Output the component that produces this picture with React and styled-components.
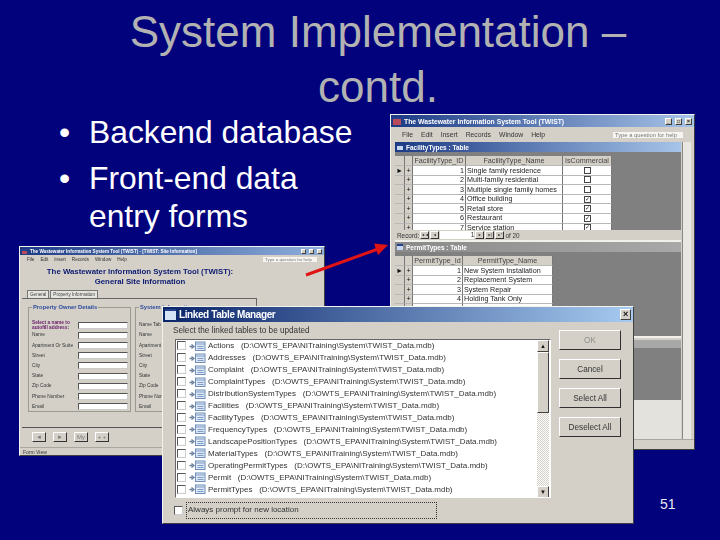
import React from 'react';
import styled, {createGlobalStyle} from 'styled-components';

const GlobalStyle = createGlobalStyle`
    html, body {
        margin: 0;
        padding: 0;
        background: #02027c;
    }
`;

const Slide = styled.div`
    position: relative;
    width: 720px;
    height: 540px;
    overflow: hidden;
    background: #02027c;
    font-family: "Liberation Sans", Arial, sans-serif;
`;

const Title = styled.h1`
    margin: 0 0 0 98px;
    padding-top: 4px;
    width: 560px;
    font-size: 44px;
    line-height: 55px;
    font-weight: normal;
    text-align: center;
    color: #b2b2b2;
`;

const Bullets = styled.ul`
    margin: -1px 0 0 89px;
    padding: 0;
    list-style: none;
    color: #fff;
    font-size: 31.8px;
    line-height: 38px;
`;

const Bullet = styled.li`
    position: relative;
    margin-bottom: 8px;
    &::before {
        content: "•";
        position: absolute;
        left: -30px;
    }
`;

const PageNumber = styled.div`
    position: absolute;
    left: 660px;
    top: 496px;
    font-size: 14px;
    color: #e8e8f4;
`;

/* screenshots pasted on the slide: free canvas */
const Win = styled.div`
    position: absolute;
    left: ${p => p.x}px;
    top: ${p => p.y}px;
    width: ${p => p.w}px;
    height: ${p => p.h}px;
    display: flex;
    flex-direction: column;
    box-sizing: border-box;
    background: #d4d0c8;
    border: 1px solid #f4f2ec;
    border-right-color: #404040;
    border-bottom-color: #404040;
    filter: blur(0.35px);
    overflow: hidden;
    color: #222;
`;

const TitleBar = styled.div`
    flex: none;
    height: ${p => p.h}px;
    display: flex;
    align-items: center;
    padding: 0 2px;
    gap: 3px;
    background: linear-gradient(90deg, ${p => p.from || '#0a246a'}, ${p => p.to || '#a6caf0'});
    color: #fff;
    font-size: ${p => p.size}px;
    letter-spacing: ${p => p.track || 0}px;
    font-weight: bold;
    white-space: nowrap;
`;

const TitleIcon = styled.span`
    width: ${p => p.s}px;
    height: ${p => p.s}px;
    flex: none;
    background: ${p => p.c || '#c9d8f0'};
    border-top: 2px solid #24408c;
    box-sizing: border-box;
`;

const TitleText = styled.span`
    flex: 1;
`;

const CaptionButton = styled.span`
    width: ${p => p.s}px;
    height: ${p => p.s}px;
    flex: none;
    display: flex;
    align-items: center;
    justify-content: center;
    background: #d4d0c8;
    color: #111;
    font-size: ${p => p.s - 2}px;
    line-height: 1;
    border: 1px solid;
    border-color: #fff #404040 #404040 #fff;
    box-sizing: border-box;
`;

const MenuBar = styled.div`
    flex: none;
    height: ${p => p.h}px;
    display: flex;
    align-items: center;
    gap: ${p => p.gap}px;
    padding: 0 ${p => p.inset}px;
    font-size: ${p => p.size}px;
    color: #333;
`;

const HelpBox = styled.span`
    margin-left: auto;
    width: ${p => p.w}px;
    padding: 0 2px;
    background: #f6f5f2;
    color: #777;
    font-size: ${p => p.size}px;
    white-space: nowrap;
`;

/* access main window */
const Mdi = styled.div`
    flex: 1;
    display: flex;
    min-height: 0;
`;

const MdiBody = styled.div`
    flex: 1;
    padding: 0 0 0 4px;
    display: flex;
    flex-direction: column;
    min-width: 0;
`;

const MdiScroll = styled.div`
    flex: none;
    width: 8px;
    margin: 0 3px 0 1px;
    background: #e9e7e2;
    border-left: 1px solid #888;
`;

const Child = styled.div`
    flex: none;
    height: ${p => p.h}px;
    display: flex;
    flex-direction: column;
    background: #808080;
    border-bottom: 2px solid #f2f0ea;
    overflow: hidden;
`;

const Sheet = styled.div`
    flex: 1;
    min-height: 0;
    overflow: hidden;
`;

const SheetGrid = styled.div`
    display: inline-grid;
    grid-template-columns: ${p => p.cols};
    grid-auto-rows: 9.6px;
    font-size: 7.2px;
    line-height: 9.6px;
`;

const Cell = styled.div`
    box-sizing: border-box;
    background: ${p => p.head ? '#d4d0c8' : '#fff'};
    border-right: 1px solid #777;
    border-bottom: 1px solid #b8b8b8;
    padding: 0 1px;
    white-space: nowrap;
    display: flex;
    align-items: center;
    justify-content: ${p => p.align === 'right' ? 'flex-end' : p.align === 'center' ? 'center' : 'flex-start'};
    color: ${p => p.head ? '#444' : '#222'};
`;

const Selector = styled(Cell)`
    background: #d4d0c8;
    color: #111;
    justify-content: center;
`;

const Tick = styled.span`
    width: 5px;
    height: 5px;
    border: 1px solid #444;
    background: #fff;
    color: #222;
    font-size: 6px;
    line-height: 5px;
    text-align: center;
`;

const NavBar = styled.div`
    flex: none;
    height: 10px;
    display: flex;
    align-items: center;
    gap: 1px;
    padding-left: 2px;
    background: #d4d0c8;
    font-size: 6.4px;
    color: #333;
`;

const NavButton = styled.span`
    width: 9px;
    height: 8px;
    display: flex;
    align-items: center;
    justify-content: center;
    border: 1px solid;
    border-color: #fff #333 #333 #fff;
    box-sizing: border-box;
    font-size: 3.6px;
    color: #111;
`;

const NavInput = styled.span`
    width: 34px;
    height: 8px;
    background: #fff;
    text-align: right;
    line-height: 8px;
`;

const CollapsedChild = styled.div`
    flex: none;
    height: 60px;
    display: flex;
    flex-direction: column;
    background: #808080;
    margin-top: 2px;
`;

const GreyCaption = styled.div`
    height: 8px;
    background: #a8a8a8;
`;

const AppFloor = styled.div`
    flex: 1;
    background: #e4e2dc;
`;

const StatusBar = styled.div`
    flex: none;
    height: ${p => p.h}px;
    display: flex;
    align-items: center;
    padding: 0 3px;
    font-size: 5px;
    color: #333;
    background: #d4d0c8;
    border-top: 1px solid #a8a8a0;
`;

/* the site information form */
const FormHeading = styled.div`
    flex: none;
    width: 240px;
    margin: 4px 0 0 0;
    text-align: center;
    color: #0c1a70;
    font-size: 7.8px;
    line-height: 9.5px;
    font-weight: bold;
`;

const TabRow = styled.div`
    flex: none;
    display: flex;
    margin: 4px 0 0 7px;
    gap: 1px;
`;

const Tab = styled.span`
    padding: 0 2px;
    height: 7px;
    line-height: 7px;
    font-size: 4.6px;
    color: #444;
    background: #e6e4de;
    border: 1px solid #777;
    border-bottom: none;
`;

const TabPanel = styled.div`
    flex: none;
    width: 235px;
    height: 129px;
    margin-left: 2px;
    padding: 8px 0 0 6px;
    box-sizing: border-box;
    display: flex;
    gap: 4px;
    border-top: 1px solid #666;
    border-right: 1px solid #666;
`;

const GroupBox = styled.div`
    position: relative;
    flex: none;
    width: ${p => p.w}px;
    height: 105px;
    box-sizing: border-box;
    padding: 12px 3px 0 3px;
    border: 1px solid #9a9a94;
`;

const GroupLabel = styled.span`
    position: absolute;
    left: 3px;
    top: -4px;
    padding: 0 1px;
    background: #d4d0c8;
    color: #2a4a9c;
    font-size: 5.8px;
    font-weight: bold;
    white-space: nowrap;
`;

const FormRow = styled.div`
    height: 10.2px;
    display: flex;
    align-items: center;
    font-size: 4.8px;
    color: ${p => p.accent ? '#6a1a6a' : '#333'};
    font-weight: ${p => p.accent ? 'bold' : 'normal'};
`;

const FormLabel = styled.span`
    width: 46px;
    flex: none;
    line-height: 5.6px;
    white-space: nowrap;
`;

const FormInput = styled.span`
    width: 50px;
    height: 7px;
    flex: none;
    background: #fff;
    border: 1px solid #555;
    border-right-color: #ccc;
    border-bottom-color: #ccc;
    box-sizing: border-box;
`;

const FormFooter = styled.div`
    flex: none;
    height: 20px;
    width: 143px;
    margin-left: 2px;
    padding: 4px 0 0 10px;
    box-sizing: border-box;
    display: flex;
    gap: 7px;
    border-top: 1px solid #555;
`;

const FooterButton = styled.span`
    width: 14px;
    height: 10px;
    display: flex;
    align-items: center;
    justify-content: center;
    font-size: 6px;
    color: #777;
    border: 1px solid;
    border-color: #fff #333 #333 #fff;
    box-sizing: border-box;
`;

/* linked table manager dialog */
const DialogBody = styled.div`
    flex: 1;
    display: grid;
    grid-template-columns: 378px 1fr;
    grid-template-rows: 17px 159px 1fr;
    column-gap: 8px;
    padding: 0 0 0 10px;
    color: #333;
    min-height: 0;
`;

const Prompt = styled.div`
    grid-column: 1 / 3;
    padding-top: 3px;
    line-height: 12px;
    font-size: 8.2px;
`;

const ListBox = styled.div`
    grid-column: 1;
    grid-row: 2;
    position: relative;
    margin-left: 2px;
    box-sizing: border-box;
    background: #fff;
    border: 1px solid;
    border-color: #666 #fff #fff #666;
    overflow: hidden;
`;

const ListRow = styled.div`
    height: 11.93px;
    display: flex;
    align-items: center;
    white-space: pre;
    font-size: 8px;
`;

const Check = styled.span`
    flex: none;
    width: 9px;
    height: 9px;
    margin: 0 3px 0 1px;
    box-sizing: border-box;
    background: #fff;
    border: 1px solid;
    border-color: #555 #ccc #ccc #555;
`;

const ScrollBar = styled.div`
    position: absolute;
    top: 0;
    right: 1px;
    bottom: 0;
    width: 12px;
    display: flex;
    flex-direction: column;
    background: repeating-conic-gradient(#d4d0c8 0 25%, #fff 0 50%) 0 0 / 2px 2px;
`;

const ScrollButton = styled.span`
    flex: none;
    height: ${p => p.h}px;
    margin-bottom: ${p => p.push || 0}px;
    display: flex;
    align-items: center;
    justify-content: center;
    background: #d4d0c8;
    font-size: 6px;
    color: #111;
    box-sizing: border-box;
    border: 1px solid;
    border-color: #fff #404040 #404040 #fff;
`;

const ButtonColumn = styled.div`
    grid-column: 2;
    grid-row: 2 / 4;
    display: flex;
    flex-direction: column;
    gap: 9px;
    margin-top: -9px;
`;

const DialogButton = styled.div`
    width: 62px;
    height: 20px;
    display: flex;
    align-items: center;
    justify-content: center;
    box-sizing: border-box;
    font-size: 8.2px;
    background: #d4d0c8;
    color: ${p => p.$disabled ? '#8c8c86' : '#333'};
    border: 1px solid;
    border-color: #fff #303030 #303030 #fff;
`;

const AlwaysRow = styled.div`
    grid-column: 1;
    grid-row: 3;
    margin-top: 4px;
    display: flex;
    align-items: center;
    height: 17px;
`;

const AlwaysLabel = styled.span`
    width: 251px;
    height: 17px;
    box-sizing: border-box;
    padding-left: 1px;
    line-height: 13px;
    border: 1px dotted #333;
    font-size: 8px;
`;

const Pointer = styled.svg`
    position: absolute;
    left: 300px;
    top: 240px;
`;

const TableGlyph = () => (
    <svg width="19" height="10" viewBox="0 0 19 10" style={{flex: 'none'}}>
        <path d="M0.5 5.5h3M2.5 3.5l2.5 2-2.5 2" fill="none" stroke="#6a7f9c" strokeWidth="1.3" />
        <rect x="6.5" y="1" width="9.5" height="8.5" fill="#dfe8f6" stroke="#6f8fb8" />
        <path d="M6.5 3h9.5M8.5 5.5h6M8.5 7.5h6" stroke="#7f9cc4" strokeWidth="1" />
    </svg>
);

const facilityRows = [
    ['1', 'Single family residence', false],
    ['2', 'Multi-family residential', false],
    ['3', 'Multiple single family homes', false],
    ['4', 'Office building', true],
    ['5', 'Retail store', true],
    ['6', 'Restaurant', true],
    ['7', 'Service station', true],
];

const permitRows = [
    ['1', 'New System Installation'],
    ['2', 'Replacement System'],
    ['3', 'System Repair'],
    ['4', 'Holding Tank Only'],
    ['5', 'Other'],
];

const path = 'D:\\OWTS_EPA\\NITraining\\System\\TWIST_Data.mdb';
const linkedTables = [
    'Actions', 'Addresses', 'Complaint', 'ComplaintTypes', 'DistributionSystemTypes',
    'Facilities', 'FacilityTypes', 'FrequencyTypes', 'LandscapePositionTypes',
    'MaterialTypes', 'OperatingPermitTypes', 'Permit', 'PermitTypes',
];

const ownerFields = [
    'Name', 'Apartment Or Suite', 'Street', 'City', 'State', 'Zip Code', 'Phone Number', 'Email',
];
const systemFields = [
    'Name Tab', 'Name', 'Apartment', 'Street', 'City', 'State', 'Zip Code', 'Phone Numb', 'Email',
];

function AccessWindow() {
    return (
        <Win x={390} y={114} w={305} h={336}>
            <TitleBar h={12} size={6.8} from="#1c3a84" to="#a6c4e8">
                <TitleIcon s={8} c="#b84a5a" />
                <TitleText>The Wastewater Information System Tool (TWIST)</TitleText>
                <CaptionButton s={7}>_</CaptionButton>
                <CaptionButton s={7}>□</CaptionButton>
                <CaptionButton s={7}>×</CaptionButton>
            </TitleBar>
            <MenuBar h={15} gap={8} inset={11} size={6.8}>
                <span>File</span><span>Edit</span><span>Insert</span><span>Records</span><span>Window</span><span>Help</span>
                <HelpBox w={66} size={5.8}>Type a question for help</HelpBox>
            </MenuBar>
            <Mdi>
                <MdiBody>
                    <Child h={98}>
                        <TitleBar h={10} size={6.5} from="#1c3a84" to="#a6c4e8">
                            <TitleIcon s={6} />
                            <TitleText>FacilityTypes : Table</TitleText>
                        </TitleBar>
                        <Sheet>
                            <SheetGrid cols="10px 8px 53px 97px 49px">
                                <Selector head /><Selector head />
                                <Cell head align="center">FacilityType_ID</Cell>
                                <Cell head align="center">FacilityType_Name</Cell>
                                <Cell head align="center">IsCommercial</Cell>
                                {facilityRows.map(([id, name, on], i) => (
                                    <React.Fragment key={id}>
                                        <Selector>{i === 0 ? '►' : ''}</Selector>
                                        <Selector>+</Selector>
                                        <Cell align="right">{id}</Cell>
                                        <Cell>{name}</Cell>
                                        <Cell align="center"><Tick>{on ? '✓' : ''}</Tick></Cell>
                                    </React.Fragment>
                                ))}
                            </SheetGrid>
                        </Sheet>
                        <NavBar>
                            Record: <NavButton>◄◄</NavButton><NavButton>◄</NavButton>
                            <NavInput>1</NavInput>
                            <NavButton>►</NavButton><NavButton>►|</NavButton><NavButton>►*</NavButton>
                            of 20
                        </NavBar>
                    </Child>
                    <Child h={94}>
                        <TitleBar h={10} size={6.5} from="#8a8a8a" to="#a8a8a8">
                            <TitleIcon s={6} />
                            <TitleText>PermitTypes : Table</TitleText>
                        </TitleBar>
                        <Sheet>
                            <SheetGrid cols="10px 8px 50px 90px">
                                <Selector head /><Selector head />
                                <Cell head align="center">PermitType_Id</Cell>
                                <Cell head align="center">PermitType_Name</Cell>
                                {permitRows.map(([id, name], i) => (
                                    <React.Fragment key={id}>
                                        <Selector>{i === 0 ? '►' : ''}</Selector>
                                        <Selector>+</Selector>
                                        <Cell align="right">{id}</Cell>
                                        <Cell>{name}</Cell>
                                    </React.Fragment>
                                ))}
                            </SheetGrid>
                        </Sheet>
                    </Child>
                    <CollapsedChild><GreyCaption /></CollapsedChild>
                    <AppFloor />
                </MdiBody>
                <MdiScroll />
            </Mdi>
            <StatusBar h={9} />
        </Win>
    );
}

function SiteWindow() {
    return (
        <Win x={19} y={246} w={306} h={210}>
            <TitleBar h={8} size={4.6} from="#1c3a84" to="#8fb0dc">
                <TitleIcon s={5} c="#b84a5a" />
                <TitleText>The Wastewater Information System Tool (TWIST) - [TWIST: Site Information]</TitleText>
                <CaptionButton s={5} />
                <CaptionButton s={5} />
                <CaptionButton s={5} />
            </TitleBar>
            <MenuBar h={8} gap={6} inset={7} size={4.6}>
                <span>File</span><span>Edit</span><span>Insert</span><span>Records</span><span>Window</span><span>Help</span>
                <HelpBox w={50} size={4.4}>Type a question for help</HelpBox>
            </MenuBar>
            <FormHeading>
                The Wastewater Information System Tool (TWIST):<br />General Site Information
            </FormHeading>
            <TabRow>
                <Tab>General</Tab>
                <Tab>Property Information</Tab>
            </TabRow>
            <TabPanel>
                <GroupBox w={103}>
                    <GroupLabel>Property Owner Details</GroupLabel>
                    <FormRow accent>
                        <FormLabel>Select a name to<br />autofill address:</FormLabel>
                        <FormInput />
                    </FormRow>
                    {ownerFields.map(label => (
                        <FormRow key={label}>
                            <FormLabel>{label}</FormLabel>
                            <FormInput />
                        </FormRow>
                    ))}
                </GroupBox>
                <GroupBox w={60}>
                    <GroupLabel>System Information</GroupLabel>
                    {systemFields.map(label => (
                        <FormRow key={label}>
                            <FormLabel>{label}</FormLabel>
                        </FormRow>
                    ))}
                </GroupBox>
            </TabPanel>
            <FormFooter>
                <FooterButton>◄</FooterButton>
                <FooterButton>►</FooterButton>
                <FooterButton>My</FooterButton>
                <FooterButton>+ +</FooterButton>
            </FormFooter>
            <StatusBar h={8}>Form View</StatusBar>
        </Win>
    );
}

function LinkedTableManager() {
    return (
        <Win x={162} y={306} w={472} h={218}>
            <TitleBar h={15} size={10} track={-0.4}>
                <TitleIcon s={11} c="#d6e2f6" />
                <TitleText>Linked Table Manager</TitleText>
                <CaptionButton s={11}>×</CaptionButton>
            </TitleBar>
            <DialogBody>
                <Prompt>Select the linked tables to be updated</Prompt>
                <ListBox>
                    {linkedTables.map(name => (
                        <ListRow key={name}>
                            <Check />
                            <TableGlyph />
                            {name}{'   ('}{path}{')'}
                        </ListRow>
                    ))}
                    <ScrollBar>
                        <ScrollButton h={12}>▲</ScrollButton>
                        <ScrollButton h={61} push={73} />
                        <ScrollButton h={12}>▼</ScrollButton>
                    </ScrollBar>
                </ListBox>
                <ButtonColumn>
                    <DialogButton $disabled>OK</DialogButton>
                    <DialogButton>Cancel</DialogButton>
                    <DialogButton>Select All</DialogButton>
                    <DialogButton>Deselect All</DialogButton>
                </ButtonColumn>
                <AlwaysRow>
                    <Check />
                    <AlwaysLabel>Always prompt for new location</AlwaysLabel>
                </AlwaysRow>
            </DialogBody>
        </Win>
    );
}

export default function App() {
    return (
        <Slide>
            <GlobalStyle />
            <Title>System Implementation – contd.</Title>
            <Bullets>
                <Bullet>Backend database</Bullet>
                <Bullet>Front-end data<br />entry forms</Bullet>
            </Bullets>
            <AccessWindow />
            <SiteWindow />
            <Pointer width="92" height="40" viewBox="0 0 92 40">
                <path d="M6 35L78 9" stroke="#e01414" strokeWidth="3" fill="none" />
                <path d="M88 5L74 3.5L78 15z" fill="#e01414" />
            </Pointer>
            <LinkedTableManager />
            <PageNumber>51</PageNumber>
        </Slide>
    );
}
